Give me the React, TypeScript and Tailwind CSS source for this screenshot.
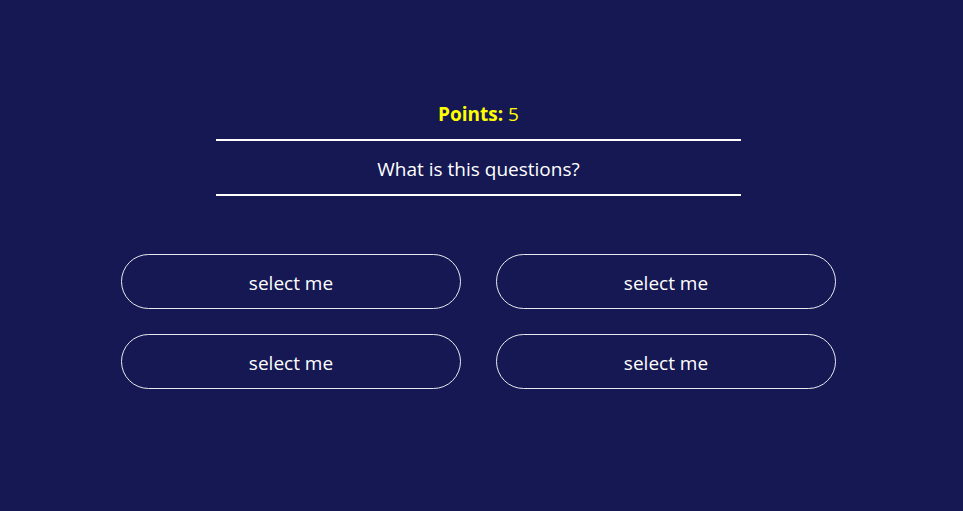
const options = ["select me", "select me", "select me", "select me"];

export default function App() {
  return (
    <div className="min-h-[511px] w-full bg-[#151853] font-['Open_Sans',sans-serif] text-white">
      <div className="flex flex-col items-center pr-[6px] pt-[100px]">
        <p className="text-[19px] leading-[28px] text-[#ffff00]">
          <span className="font-bold">Points:</span> 5
        </p>
        <div className="mt-[11px] w-[525px] border-y-2 border-white pb-[12px] pt-[15px] text-center text-[19px] leading-[26px]">
          What is this questions?
        </div>
        <div className="mt-[58px] grid grid-cols-2 gap-x-[35px] gap-y-[25px]">
          {options.map((option, index) => (
            <button
              key={index}
              className="h-[55px] w-[340px] rounded-full border border-white/90 pt-[3px] text-[19px]"
            >
              {option}
            </button>
          ))}
        </div>
      </div>
    </div>
  );
}
